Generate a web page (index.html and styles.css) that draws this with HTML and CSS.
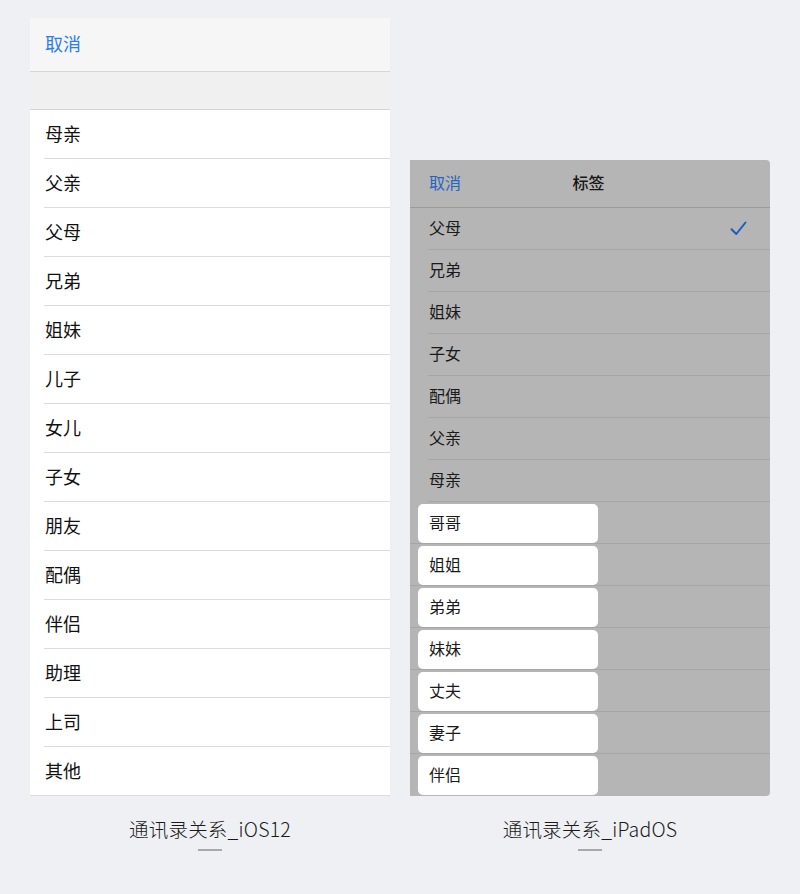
FILE: index.html
```html
<!DOCTYPE html>
<html lang="zh-CN">
<head>
<meta charset="utf-8">
<title>通讯录关系</title>
<link rel="stylesheet" href="styles.css">
</head>
<body>
<div class="page">
  <div class="col">
    <div class="ios">
      <div class="ios-head"><span class="cancel">取消</span></div>
      <div class="ios-strip"></div>
      <ul class="ios-list">
        <li class="ios-row"><span>母亲</span></li>
        <li class="ios-row"><span>父亲</span></li>
        <li class="ios-row"><span>父母</span></li>
        <li class="ios-row"><span>兄弟</span></li>
        <li class="ios-row"><span>姐妹</span></li>
        <li class="ios-row"><span>儿子</span></li>
        <li class="ios-row"><span>女儿</span></li>
        <li class="ios-row"><span>子女</span></li>
        <li class="ios-row"><span>朋友</span></li>
        <li class="ios-row"><span>配偶</span></li>
        <li class="ios-row"><span>伴侣</span></li>
        <li class="ios-row"><span>助理</span></li>
        <li class="ios-row"><span>上司</span></li>
        <li class="ios-row"><span>其他</span></li>
      </ul>
    </div>
    <div class="caption">通讯录关系_iOS12</div>
    <div class="dash"></div>
  </div>
  <div class="col col-right">
    <div class="ipad">
      <div class="ipad-head">
        <span class="ipad-cancel">取消</span>
        <span class="ipad-title">标签</span>
      </div>
      <ul class="ipad-list">
        <li class="ipad-row"><span class="ipad-text">父母</span>
          <svg class="check" width="17" height="15" viewBox="0 0 17 15"><path d="M1.5 8.2 L6.3 13 L15.5 1.5" fill="none" stroke="#1d5ac4" stroke-width="2" stroke-linecap="round" stroke-linejoin="round"/></svg>
        </li>
        <li class="ipad-row"><span class="ipad-text">兄弟</span></li>
        <li class="ipad-row"><span class="ipad-text">姐妹</span></li>
        <li class="ipad-row"><span class="ipad-text">子女</span></li>
        <li class="ipad-row"><span class="ipad-text">配偶</span></li>
        <li class="ipad-row"><span class="ipad-text">父亲</span></li>
        <li class="ipad-row"><span class="ipad-text">母亲</span></li>
        <li class="ipad-row card-row"><span class="card">哥哥</span></li>
        <li class="ipad-row card-row"><span class="card">姐姐</span></li>
        <li class="ipad-row card-row"><span class="card">弟弟</span></li>
        <li class="ipad-row card-row"><span class="card">妹妹</span></li>
        <li class="ipad-row card-row"><span class="card">丈夫</span></li>
        <li class="ipad-row card-row"><span class="card">妻子</span></li>
        <li class="ipad-row card-row last"><span class="card">伴侣</span></li>
      </ul>
    </div>
    <div class="caption">通讯录关系_iPadOS</div>
    <div class="dash"></div>
  </div>
</div>
</body>
</html>
```

FILE: styles.css
```css
* { box-sizing: border-box; }
html, body { margin: 0; padding: 0; }
body {
  background: #eff0f4;
  font-family: "Noto Sans CJK SC", "Noto Sans", "Liberation Sans", sans-serif;
  color: #111;
  width: 800px;
  height: 894px;
  overflow: hidden;
}
ul { list-style: none; margin: 0; padding: 0; }

.page {
  display: flex;
  gap: 20px;
  padding: 18px 30px 0;
}
.col {
  width: 360px;
  display: flex;
  flex-direction: column;
  align-items: center;
}
.col-right { padding-top: 142px; }

/* iOS 12 panel */
.ios {
  width: 360px;
  background: #fff;
  border-bottom: 1px solid #dcdcdc;
}
.ios-head {
  height: 54px;
  background: #f6f6f6;
  border-bottom: 1px solid #d6d6d6;
  display: flex;
  align-items: center;
  padding: 0 0 3px 15px;
}
.cancel {
  color: #2c7cf5;
  font-size: 18px;
  line-height: 1;
}
.ios-strip {
  height: 38px;
  background: #f0f0f0;
  border-bottom: 1px solid #d6d6d6;
}
.ios-row {
  height: 49px;
  margin-left: 14px;
  padding: 0 0 3px 1px;
  border-bottom: 1px solid #dcdcdc;
  display: flex;
  align-items: center;
  font-size: 18px;
  color: #111;
}
.ios-row:last-child { border-bottom: none; height: 48px; }

/* iPadOS panel */
.ipad {
  width: 360px;
  background: #b5b5b5;
  border-radius: 0 4px 4px 0;
  overflow: hidden;
}
.ipad-head {
  height: 48px;
  border-bottom: 1px solid #9b9b9b;
  position: relative;
  display: flex;
  align-items: center;
  justify-content: center;
  padding-bottom: 4px;
}
.ipad-cancel {
  position: absolute;
  left: 19px;
  top: 11px;
  color: #2464c4;
  font-size: 16px;
  line-height: 22px;
}
.ipad-title {
  font-size: 16px;
  font-weight: 500;
  color: #151515;
  line-height: 22px;
  margin-left: -3px;
}
.ipad-row {
  height: 42px;
  margin-left: 18px;
  border-bottom: 1px solid #a6a6a6;
  display: flex;
  align-items: center;
  justify-content: space-between;
  padding: 0 23px 3px 0;
  font-size: 16px;
  color: #1a1a1a;
}
.ipad-text { padding-left: 1px; }
.check { display: block; margin-top: 3px; }
.card-row {
  margin-left: 0;
  padding: 2px 0 0 8px;
  align-items: flex-start;
}
.card-row.last { border-bottom: none; }
.card {
  width: 180px;
  height: 39px;
  background: #fff;
  border-radius: 5px;
  padding: 0 0 3px 11px;
  display: flex;
  align-items: center;
  font-size: 16px;
  color: #1a1a1a;
}

.caption {
  margin-top: 21px;
  font-size: 19.5px;
  line-height: 24px;
  font-weight: 300;
  color: #1a1a1a;
  letter-spacing: 0.2px;
}
.dash {
  margin-top: 8px;
  width: 24px;
  height: 2px;
  background: #a9a9a9;
}
```
